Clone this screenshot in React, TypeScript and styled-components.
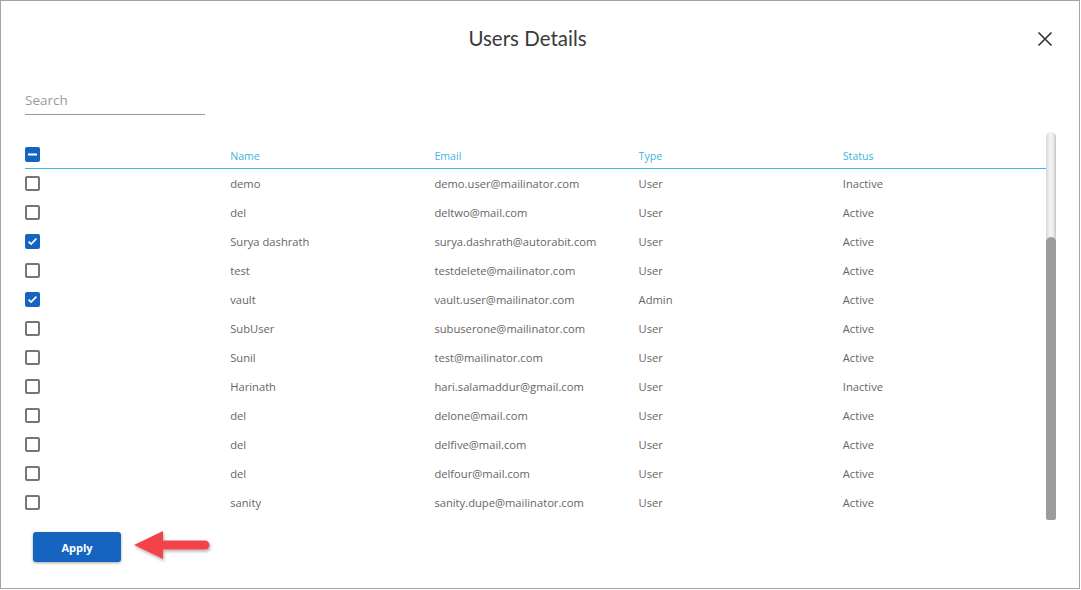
import React from "react";
import styled, { createGlobalStyle } from "styled-components";

const Global = createGlobalStyle`
  html, body { margin: 0; padding: 0; background: #ffffff; }
  body { font-family: "Open Sans", "Liberation Sans", sans-serif; }
  * { box-sizing: border-box; }
`;

const Frame = styled.div`
  width: 1080px;
  height: 589px;
  border: 1px solid #a3a3a3;
  background: #fff;
  padding: 0 23px 0 24px;
  display: flex;
  flex-direction: column;
`;

const Header = styled.div`
  height: 75px;
  display: flex;
  align-items: center;
  padding-right: 3px;
`;

const Title = styled.h1`
  flex: 1;
  margin: 0;
  text-align: center;
  font-family: Lato, "Open Sans", sans-serif;
  font-weight: 400;
  font-size: 20.5px;
  color: #3a3a3a;
  padding-bottom: 2px;
  padding-right: 2px;
`;

const CloseButton = styled.button`
  width: 16px;
  height: 16px;
  padding: 0;
  margin-left: 5px;
  border: none;
  background: none;
  display: flex;
  align-items: center;
  justify-content: center;
  cursor: pointer;
`;

const SearchInput = styled.input`
  margin-top: 12px;
  width: 180px;
  height: 27px;
  border: none;
  border-bottom: 1px solid #9a9a9a;
  outline: none;
  padding: 0 0 3px 0;
  font-family: "Open Sans", sans-serif;
  font-size: 13.5px;
  color: #333;
  &::placeholder { color: #9a9a9a; }
`;

const TableArea = styled.div`
  margin-top: 17px;
  height: 388px;
  display: flex;
`;

const Table = styled.div`
  flex: 1;
  display: flex;
  flex-direction: column;
`;

const Row = styled.div<{ $head?: boolean }>`
  display: grid;
  grid-template-columns: repeat(5, 1fr);
  align-items: center;
  height: ${(p) => (p.$head ? "37px" : "29px")};
  padding-top: ${(p) => (p.$head ? "8px" : "0")};
  border-bottom: ${(p) => (p.$head ? "1px solid #3db5e6" : "none")};
  font-size: ${(p) => (p.$head ? "10.6px" : "11.2px")};
  color: ${(p) => (p.$head ? "#45b3e3" : "#666")};
`;

const Cell = styled.div<{ $head?: boolean }>`
  white-space: nowrap;
  padding-left: 1px;
  padding-top: ${(p) => (p.$head ? "3px" : "0")};
  &:first-child { padding-left: 0; }
`;

const Box = styled.span<{ $on?: boolean }>`
  width: 15px;
  height: 15px;
  border-radius: 2px;
  display: flex;
  align-items: center;
  justify-content: center;
  background: ${(p) => (p.$on ? "#1565c0" : "#fff")};
  border: ${(p) => (p.$on ? "none" : "2px solid #767676")};
`;

const ScrollTrack = styled.div`
  width: 10px;
  display: flex;
  flex-direction: column;
`;

const TrackTop = styled.div`
  height: 110px;
  border-radius: 5px 5px 0 0;
  background: linear-gradient(to right, #d6d6d6, #f4f4f4 40%, #ededed 70%, #c9c4c4);
`;

const Thumb = styled.div`
  flex: 1;
  margin-top: -5px;
  border-radius: 5px 5px 2px 2px;
  background: #9d9c9b;
`;

const Footer = styled.div`
  margin-top: 10px;
  padding-left: 8px;
  display: flex;
  align-items: center;
  gap: 12px;
`;

const ApplyButton = styled.button`
  width: 88px;
  height: 30px;
  border: none;
  border-radius: 3px;
  background: #1565c0;
  color: #fff;
  font-family: "Open Sans", sans-serif;
  font-weight: 700;
  font-size: 11px;
  box-shadow: 0 1px 3px rgba(0, 0, 0, 0.35);
  cursor: pointer;
`;

const users = [
  { name: "demo", email: "demo.user@mailinator.com", type: "User", status: "Inactive", on: false },
  { name: "del", email: "deltwo@mail.com", type: "User", status: "Active", on: false },
  { name: "Surya dashrath", email: "surya.dashrath@autorabit.com", type: "User", status: "Active", on: true },
  { name: "test", email: "testdelete@mailinator.com", type: "User", status: "Active", on: false },
  { name: "vault", email: "vault.user@mailinator.com", type: "Admin", status: "Active", on: true },
  { name: "SubUser", email: "subuserone@mailinator.com", type: "User", status: "Active", on: false },
  { name: "Sunil", email: "test@mailinator.com", type: "User", status: "Active", on: false },
  { name: "Harinath", email: "hari.salamaddur@gmail.com", type: "User", status: "Inactive", on: false },
  { name: "del", email: "delone@mail.com", type: "User", status: "Active", on: false },
  { name: "del", email: "delfive@mail.com", type: "User", status: "Active", on: false },
  { name: "del", email: "delfour@mail.com", type: "User", status: "Active", on: false },
  { name: "sanity", email: "sanity.dupe@mailinator.com", type: "User", status: "Active", on: false },
];

const Check = ({ on }: { on: boolean }) => (
  <Box $on={on}>
    {on && (
      <svg width="15" height="15" viewBox="0 0 15 15">
        <path d="M3.6 7.6 L6.1 10.1 L11.4 4.6" fill="none" stroke="#fff" strokeWidth="1.7" />
      </svg>
    )}
  </Box>
);

const Indeterminate = () => (
  <Box $on>
    <svg width="15" height="15" viewBox="0 0 15 15">
      <rect x="3" y="6.5" width="9" height="2" fill="#fff" />
    </svg>
  </Box>
);

export default function App() {
  return (
    <>
      <Global />
      <Frame>
        <Header>
          <Title>Users Details</Title>
          <CloseButton aria-label="Close">
            <svg width="16" height="16" viewBox="0 0 16 16">
              <path d="M1.5 1.5 L14.5 14.5 M14.5 1.5 L1.5 14.5" stroke="#333" strokeWidth="1.6" fill="none" />
            </svg>
          </CloseButton>
        </Header>
        <SearchInput placeholder="Search" />
        <TableArea>
          <Table>
            <Row $head>
              <Cell>
                <Indeterminate />
              </Cell>
              <Cell $head>Name</Cell>
              <Cell $head>Email</Cell>
              <Cell $head>Type</Cell>
              <Cell $head>Status</Cell>
            </Row>
            {users.map((u, i) => (
              <Row key={i}>
                <Cell>
                  <Check on={u.on} />
                </Cell>
                <Cell>{u.name}</Cell>
                <Cell>{u.email}</Cell>
                <Cell>{u.type}</Cell>
                <Cell>{u.status}</Cell>
              </Row>
            ))}
          </Table>
          <ScrollTrack>
            <TrackTop />
            <Thumb />
          </ScrollTrack>
        </TableArea>
        <Footer>
          <ApplyButton>Apply</ApplyButton>
          <svg width="80" height="34" viewBox="0 0 80 34">
            <defs>
              <filter id="sh" x="-20%" y="-30%" width="140%" height="160%">
                <feDropShadow dx="1" dy="2" stdDeviation="1.5" floodColor="#000" floodOpacity="0.3" />
              </filter>
            </defs>
            <g filter="url(#sh)">
              <path d="M1 15 L30 1 L30 29 Z" fill="#f4434a" />
              <line x1="28" y1="15" x2="72" y2="15" stroke="#f4434a" strokeWidth="9" strokeLinecap="round" />
            </g>
          </svg>
        </Footer>
      </Frame>
    </>
  );
}
